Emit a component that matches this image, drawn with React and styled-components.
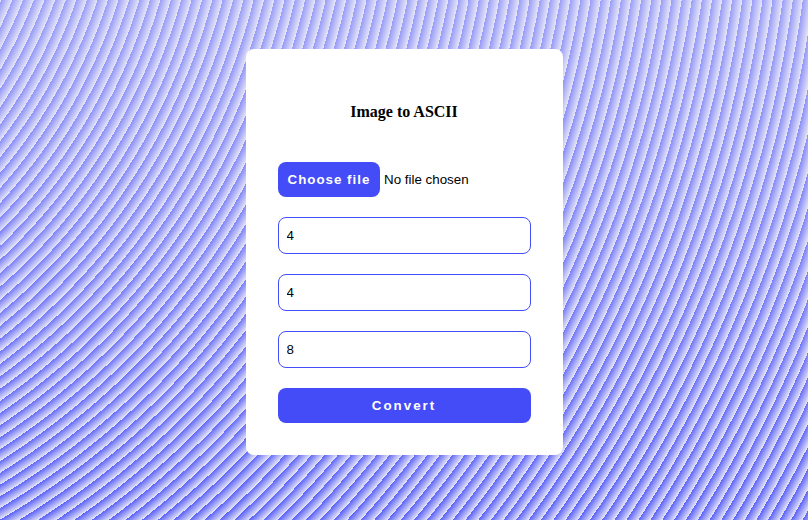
import React from "react";
import styled, { createGlobalStyle } from "styled-components";

const GlobalStyle = createGlobalStyle`
  * { box-sizing: border-box; }
  body { margin: 0; }
`;

const Page = styled.main`
  height: 520px;
  display: flex;
  justify-content: center;
  align-items: flex-start;
  padding-top: 49px;
  overflow: hidden;
  background-color: #e5e5f7;
  background-image:
    repeating-radial-gradient(circle at -396px -164px, transparent 0, #e5e5f7 10px),
    linear-gradient(#444cf755 -164px, #444cf7 684px);
`;

const Card = styled.form`
  display: flex;
  flex-direction: column;
  gap: 20px;
  width: 317px;
  height: 406px;
  padding: 32px;
  border-radius: 8px;
  background: #fff;
  font-family: "Liberation Sans", Arial, sans-serif;
  font-size: 13.3333px;
`;

const Title = styled.h4`
  margin: 0;
  height: 61px;
  padding-top: 21px;
  text-align: center;
  font: bold 16px/19px "Liberation Serif", "Times New Roman", serif;
  color: #000;
`;

const FileRow = styled.div`
  display: flex;
  align-items: center;
  gap: 4.6px;
  height: 35px;
  color: #000;
`;

const Button = styled.button`
  height: 35px;
  padding: 0 ${(p) => (p.$wide ? 0 : "10px")};
  width: ${(p) => (p.$wide ? "100%" : "102px")};
  border: 0;
  border-radius: 8px;
  background: #444cf7;
  color: #fff;
  font: bold 13.3333px "Liberation Sans", Arial, sans-serif;
  letter-spacing: ${(p) => (p.$wide ? "2px" : "1px")};
  white-space: nowrap;
`;

const Field = styled.input`
  width: 100%;
  height: 37px;
  padding: 0 8px;
  border: 1px solid #444cf7;
  border-radius: 8px;
  background: #fff;
  color: #000;
  font: 13.3333px "Liberation Sans", Arial, sans-serif;
`;

export default function App() {
  return (
    <>
      <GlobalStyle />
      <Page>
        <Card>
          <Title>Image to ASCII</Title>
          <FileRow>
            <Button type="button">Choose file</Button>
            <span>No file chosen</span>
          </FileRow>
          <Field defaultValue="4" />
          <Field defaultValue="4" />
          <Field defaultValue="8" />
          <Button type="button" $wide>Convert</Button>
        </Card>
      </Page>
    </>
  );
}
